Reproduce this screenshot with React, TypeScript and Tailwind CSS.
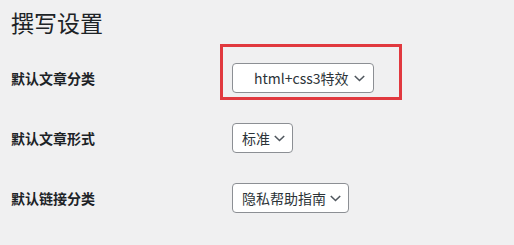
const font = {
  fontFamily: '"Noto Sans CJK SC", "Noto Sans", sans-serif',
};

type Row = {
  label: string;
  value: string;
  width: string;
  pad: string;
  boxed?: boolean;
};

const rows: Row[] = [
  { label: "默认文章分类", value: "html+css3特效", width: "w-[142px]", pad: "pl-[21px]", boxed: true },
  { label: "默认文章形式", value: "标准", width: "w-[61px]", pad: "pl-[9px]" },
  { label: "默认链接分类", value: "隐私帮助指南", width: "w-[117px]", pad: "pl-[9px]" },
];

function Chevron() {
  return (
    <svg width="11" height="7" viewBox="0 0 11 7" fill="none" className="shrink-0 mt-[1px]">
      <path d="M0.8 1l4.7 4.5L10.2 1" stroke="#50575e" strokeWidth="1.6" />
    </svg>
  );
}

function Select({ row }: { row: Row }) {
  return (
    <div className="relative">
      <div
        className={`${row.width} ${row.pad} h-[30px] pr-[8px] flex items-center justify-between gap-[4px] rounded-[4px] border border-[#8c8f94] bg-white text-[14px] text-[#2c3338]`}
      >
        <span className="whitespace-nowrap">{row.value}</span>
        <Chevron />
      </div>
      {row.boxed && (
        <div className="absolute left-[-12px] top-[-19px] w-[182px] h-[56px] border-[3px] border-[#e1393f]" />
      )}
    </div>
  );
}

export default function App() {
  return (
    <div className="w-[514px] h-[245px] bg-[#f0f0f1] pl-[11px] overflow-hidden text-[#1d2327]" style={font}>
      <h1 className="text-[23px] leading-[29px] pt-[8px] font-normal">撰写设置</h1>
      <div className="mt-[11px]">
        {rows.map((row) => (
          <div key={row.label} className="h-[60px] flex items-center">
            <div className="w-[221px] text-[14px] font-bold">{row.label}</div>
            <Select row={row} />
          </div>
        ))}
      </div>
    </div>
  );
}
